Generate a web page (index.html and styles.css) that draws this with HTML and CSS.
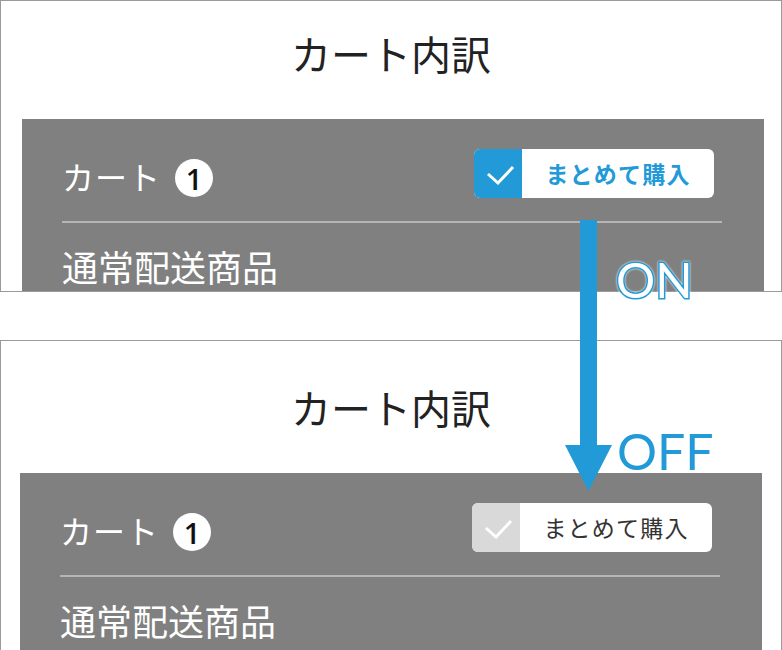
FILE: index.html
```html
<!DOCTYPE html>
<html lang="ja">
<head>
    <meta charset="UTF-8">
    <meta name="viewport" content="width=device-width, initial-scale=1.0">
    <title>カート内訳</title>
    <link rel="stylesheet" href="styles.css">
</head>
<body>

<div class="stage">

    <!-- ON state -->
    <section class="panel panel-on">
        <h1 class="head">カート内訳</h1>
        <div class="cart">
            <div class="cart-row">
                <div class="cart-title">カート<span class="badge">1</span></div>
                <button class="bulk bulk-on">
                    <span class="bulk-check">
                        <svg width="48" height="49" viewBox="0 0 48 49"><path d="M14 25 L24 34 L39 18" /></svg>
                    </span>
                    <span class="bulk-label">まとめて購入</span>
                </button>
            </div>
            <div class="cart-section">通常配送商品</div>
        </div>
    </section>

    <!-- OFF state -->
    <section class="panel panel-off">
        <h1 class="head">カート内訳</h1>
        <div class="cart">
            <div class="cart-row">
                <div class="cart-title">カート<span class="badge">1</span></div>
                <button class="bulk bulk-off">
                    <span class="bulk-check">
                        <svg width="48" height="49" viewBox="0 0 48 49"><path d="M14 25 L24 34 L39 18" /></svg>
                    </span>
                    <span class="bulk-label">まとめて購入</span>
                </button>
            </div>
            <div class="cart-section">通常配送商品</div>
        </div>
    </section>

    <!-- annotation laid over both panels -->
    <svg class="arrow" width="50" height="272" viewBox="0 0 50 272">
        <rect x="15" y="0" width="17" height="226" />
        <polygon points="0,225 47,225 23.5,271" />
    </svg>
    <div class="state state-on">ON</div>
    <div class="state state-off">OFF</div>

</div>

</body>
</html>
```

FILE: styles.css
```css
body {
    margin: 0;
    overflow: hidden;
    background-color: #fff;
    font-family: "Noto Sans CJK JP", "Noto Sans", sans-serif;
}

.stage {
    position: relative;
    width: 782px;
    height: 650px;
}

/* Panels */
.panel {
    box-sizing: border-box;
    width: 782px;
    border: 1px solid #9a9a9a;
    overflow: hidden;
    background-color: #fff;
}

.panel-on {
    height: 292px;
}

.panel-off {
    height: 330px;
    margin-top: 48px;
}

.head {
    box-sizing: border-box;
    height: 132px;
    margin: 0;
    padding-top: 46px;
    text-align: center;
    font-size: 40px;
    font-weight: 400;
    line-height: 1;
    color: #222;
}

/* the top screen is scrolled a little */
.panel-on .head {
    margin-top: -14px;
}

/* Cart block */
.cart {
    margin: 0 19px;
    padding: 0 42px 0 40px;
    height: 200px;
    background-color: #808080;
    color: #fff;
}

.panel-on .cart {
    margin: 0 17px 0 21px;
}

.cart-row {
    display: flex;
    justify-content: space-between;
    align-items: center;
    padding: 30px 8px 23px 0;
    border-bottom: 2px solid #b5b5b5;
}

.cart-title {
    display: flex;
    align-items: center;
    gap: 14px;
    margin-top: 5px;
    font-size: 32px;
    line-height: 1;
    letter-spacing: 1px;
}

.badge {
    display: flex;
    justify-content: center;
    align-items: center;
    width: 38px;
    height: 38px;
    margin-top: 4px;
    border-radius: 50%;
    background-color: #fff;
    color: #111;
    font-family: "Open Sans", sans-serif;
    font-size: 29px;
    font-weight: 600;
    letter-spacing: 0;
}

.cart-section {
    padding-top: 25px;
    font-size: 36px;
    line-height: 1;
}

/* まとめて購入 toggle */
.bulk {
    display: flex;
    width: 240px;
    height: 49px;
    padding: 0;
    border: none;
    border-radius: 6px;
    overflow: hidden;
    background-color: #fff;
    font-family: inherit;
}

.bulk-check {
    flex: 0 0 48px;
    height: 49px;
}

.bulk-check path {
    fill: none;
    stroke: #fff;
    stroke-width: 3;
}

.bulk-label {
    flex: 1;
    align-self: center;
    text-align: center;
    font-size: 23px;
    letter-spacing: 1.2px;
    line-height: 1;
}

.bulk-on .bulk-check {
    background-color: #229ad8;
}

.bulk-on .bulk-label {
    color: #229ad8;
    font-weight: 700;
}

.bulk-off .bulk-check {
    background-color: #d9d9d9;
}

.bulk-off .bulk-label {
    color: #333;
}

/* Annotation */
.arrow {
    position: absolute;
    left: 565px;
    top: 220px;
}

.arrow rect,
.arrow polygon {
    fill: #229ad8;
}

.state {
    position: absolute;
    font-family: "Lato", sans-serif;
    font-size: 47px;
    line-height: 1;
    color: #229ad8;
}

.state-on {
    left: 616px;
    top: 255px;
    font-size: 49px;
    color: #fff;
    -webkit-text-stroke: 3px #229ad8;
    paint-order: stroke fill;
    filter: drop-shadow(0 0 1px #fff);
}

.state-off {
    left: 617px;
    top: 426px;
    font-size: 50px;
}
```
